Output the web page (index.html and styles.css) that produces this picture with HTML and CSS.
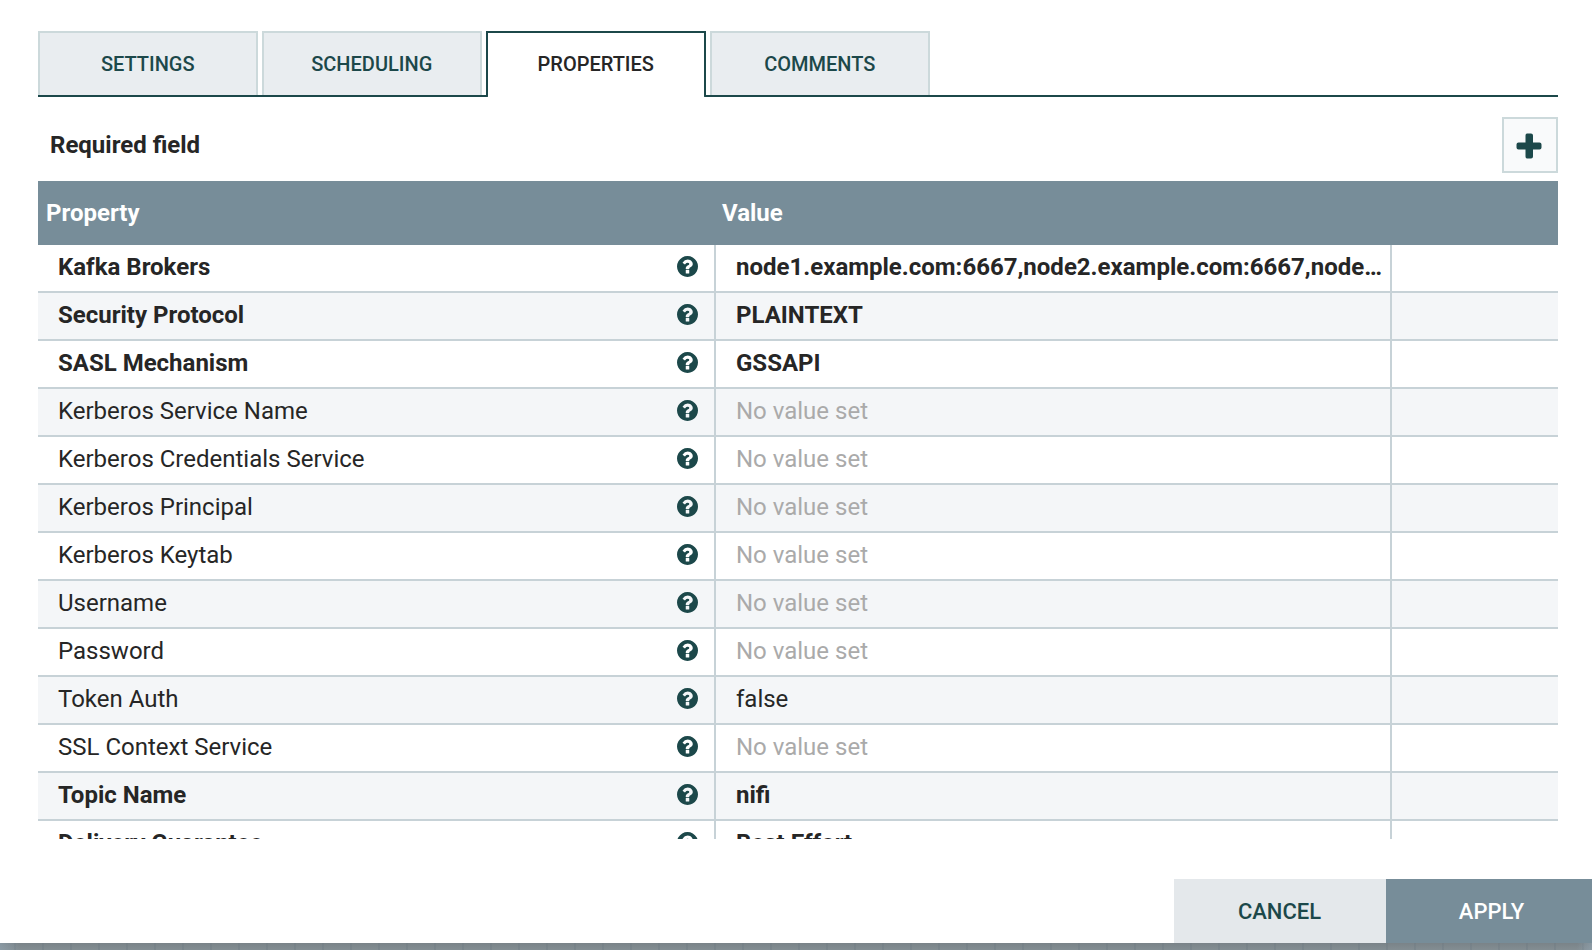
FILE: index.html
```
<!DOCTYPE html>
<html lang="en">
<head>
<meta charset="utf-8">
<title>Configure Processor</title>
<link rel="stylesheet" href="styles.css">
</head>
<body>
<svg class="defs" width="0" height="0" aria-hidden="true">
  <symbol id="help" viewBox="0 0 1536 1536">
    <path d="M896 1248v-192q0-14-9-23t-23-9H672q-14 0-23 9t-9 23v192q0 14 9 23t23 9h192q14 0 23-9t9-23zm256-672q0-88-55.500-163T958 297t-170-41q-243 0-371 213-15 24 8 42l132 100q7 6 19 6 16 0 25-12 53-68 86-92 34-24 86-24 48 0 85.500 26t37.500 59q0 38-20 61t-68 45q-63 28-115.500 86.500T640 892v36q0 14 9 23t23 9h192q14 0 23-9t9-23q0-19 21.500-49.500T972 829q32-18 49-28.500t46-35 44.500-48 28-60.500 12.500-81zm384 192q0 209-103 385.500T1153.500 1433 768 1536t-385.500-103T103 1153.500 0 768t103-385.500T382.500 103 768 0t385.500 103T1433 382.500 1536 768z"/>
  </symbol>
</svg>
<main class="dialog">
  <nav class="tabs">
    <div class="tab">SETTINGS</div>
    <div class="tab">SCHEDULING</div>
    <div class="tab active">PROPERTIES</div>
    <div class="tab">COMMENTS</div>
  </nav>
  <div class="toolbar">
    <span class="required-label">Required field</span>
    <button class="add" aria-label="Add property"><svg width="26" height="26" viewBox="0 0 26 26"><path d="M11 .5h4q2 0 2 2V9.500h6.500q2 0 2 2v3q0 2-2 2H17v7q0 2-2 2h-4q-1.500 0-1.500-2v-7h-7q-2 0-2-2v-3q0-2 2-2h7v-7q0-2 1.500-2z"/></svg></button>
  </div>
  <div class="table">
    <div class="row head"><div>Property</div><div>Value</div><div></div></div>
    <div class="body">
      <div class="row bold"><div class="name">Kafka Brokers<svg class="help"><use href="#help"/></svg></div><div class="value">node1.example.com:6667,node2.example.com:6667,node3.example.com:6667</div><div></div></div>
      <div class="row bold"><div class="name">Security Protocol<svg class="help"><use href="#help"/></svg></div><div class="value">PLAINTEXT</div><div></div></div>
      <div class="row bold"><div class="name">SASL Mechanism<svg class="help"><use href="#help"/></svg></div><div class="value">GSSAPI</div><div></div></div>
      <div class="row"><div class="name">Kerberos Service Name<svg class="help"><use href="#help"/></svg></div><div class="value unset">No value set</div><div></div></div>
      <div class="row"><div class="name">Kerberos Credentials Service<svg class="help"><use href="#help"/></svg></div><div class="value unset">No value set</div><div></div></div>
      <div class="row"><div class="name">Kerberos Principal<svg class="help"><use href="#help"/></svg></div><div class="value unset">No value set</div><div></div></div>
      <div class="row"><div class="name">Kerberos Keytab<svg class="help"><use href="#help"/></svg></div><div class="value unset">No value set</div><div></div></div>
      <div class="row"><div class="name">Username<svg class="help"><use href="#help"/></svg></div><div class="value unset">No value set</div><div></div></div>
      <div class="row"><div class="name">Password<svg class="help"><use href="#help"/></svg></div><div class="value unset">No value set</div><div></div></div>
      <div class="row"><div class="name">Token Auth<svg class="help"><use href="#help"/></svg></div><div class="value">false</div><div></div></div>
      <div class="row"><div class="name">SSL Context Service<svg class="help"><use href="#help"/></svg></div><div class="value unset">No value set</div><div></div></div>
      <div class="row bold"><div class="name">Topic Name<svg class="help"><use href="#help"/></svg></div><div class="value">nifi</div><div></div></div>
      <div class="row bold"><div class="name">Delivery Guarantee<svg class="help"><use href="#help"/></svg></div><div class="value">Best Effort</div><div></div></div>
    </div>
  </div>
  <footer class="actions">
    <button class="cancel">CANCEL</button>
    <button class="apply">APPLY</button>
  </footer>
</main>
<div class="canvas"></div>
</body>
</html>
```
FILE: styles.css
```
* { box-sizing: border-box; }
body {
  margin: 0;
  height: 950px;
  overflow: hidden;
  background: #fff;
  color: #262626;
  font-family: Roboto, sans-serif;
  font-size: 24px;
}
.defs { display: block; }
button { border: 0; padding: 0; font-family: inherit; }
.dialog {
  height: 943px;
  padding: 31px 0 0;
  display: flex;
  flex-direction: column;
}
.tabs {
  display: flex;
  gap: 4px;
  height: 66px;
  margin: 0 34px 0 38px;
  border-bottom: 2px solid #1c484a;
}
.tab {
  width: 220px;
  height: 64px;
  border: 2px solid #ccd9db;
  border-bottom: 0;
  background: #e9edf0;
  color: #1c484a;
  padding-right: 0.500px;
  font-size: 20px;
  font-weight: 500;
  line-height: 62px;
  text-align: center;
}
.tab.active {
  height: 66px;
  border-color: #1c484a;
  border-radius: 0 0 2px 2px;
  background: #fff;
  color: #262626;
}
.toolbar {
  display: flex;
  justify-content: space-between;
  height: 84px;
  padding: 20px 34px 0 50px;
}
.required-label { font-weight: 700; line-height: 56px; }
.add {
  display: flex;
  align-items: center;
  justify-content: center;
  width: 56px;
  height: 56px;
  padding: 2px 2px 0 0;
  border: 2px solid #ccd9db;
  background: #f9fafb;
  fill: #1c484a;
}
.table { margin: 0 34px 0 38px; }
.row {
  display: grid;
  grid-template-columns: 678px 676px 166px;
  height: 48px;
  border-bottom: 2px solid #c7d2d7;
  line-height: 44px;
}
.row > div { border-right: 2px solid #c7d2d7; }
.row > div:last-child { border-right: 0; }
.row.head {
  grid-template-columns: 676px 676px 168px;
  height: 64px;
  border: 0;
  background: #778d99;
  color: #fff;
  font-weight: 700;
  line-height: 64px;
}
.row.head > div { border: 0; padding-left: 8px; }
.body { height: 594px; overflow: hidden; }
.body .row:nth-child(even) { background: #f4f6f8; }
.bold { font-weight: 700; }
.name {
  display: flex;
  align-items: flex-start;
  justify-content: space-between;
  padding: 0 16px 0 20px;
}
.help { width: 21px; height: 21px; margin-top: 11px; fill: #1c484a; }
.value {
  padding: 0 8px 0 20px;
  overflow: hidden;
  text-overflow: ellipsis;
  white-space: nowrap;
}
.unset { color: #aaa; }
.actions {
  display: flex;
  justify-content: flex-end;
  height: 64px;
  margin-top: auto;
}
.actions button { padding-top: 2px; font-size: 22px; font-weight: 500; line-height: 62px; }
.actions .cancel { width: 212px; padding-right: 1px; background: #e4e8eb; color: #1c484a; }
.actions .apply { width: 206px; padding-left: 5px; background: #778d99; color: #fff; }
.canvas {
  height: 7px;
  background:
    linear-gradient(90deg, rgba(150,170,185,.5), transparent 20px, transparent 1577px, rgba(150,170,185,.5)),
    repeating-linear-gradient(90deg, transparent 0 14px, rgba(105,118,128,.3) 14px 16px, transparent 16px 28px),
    linear-gradient(#7a8388, #838e93);
}
```
